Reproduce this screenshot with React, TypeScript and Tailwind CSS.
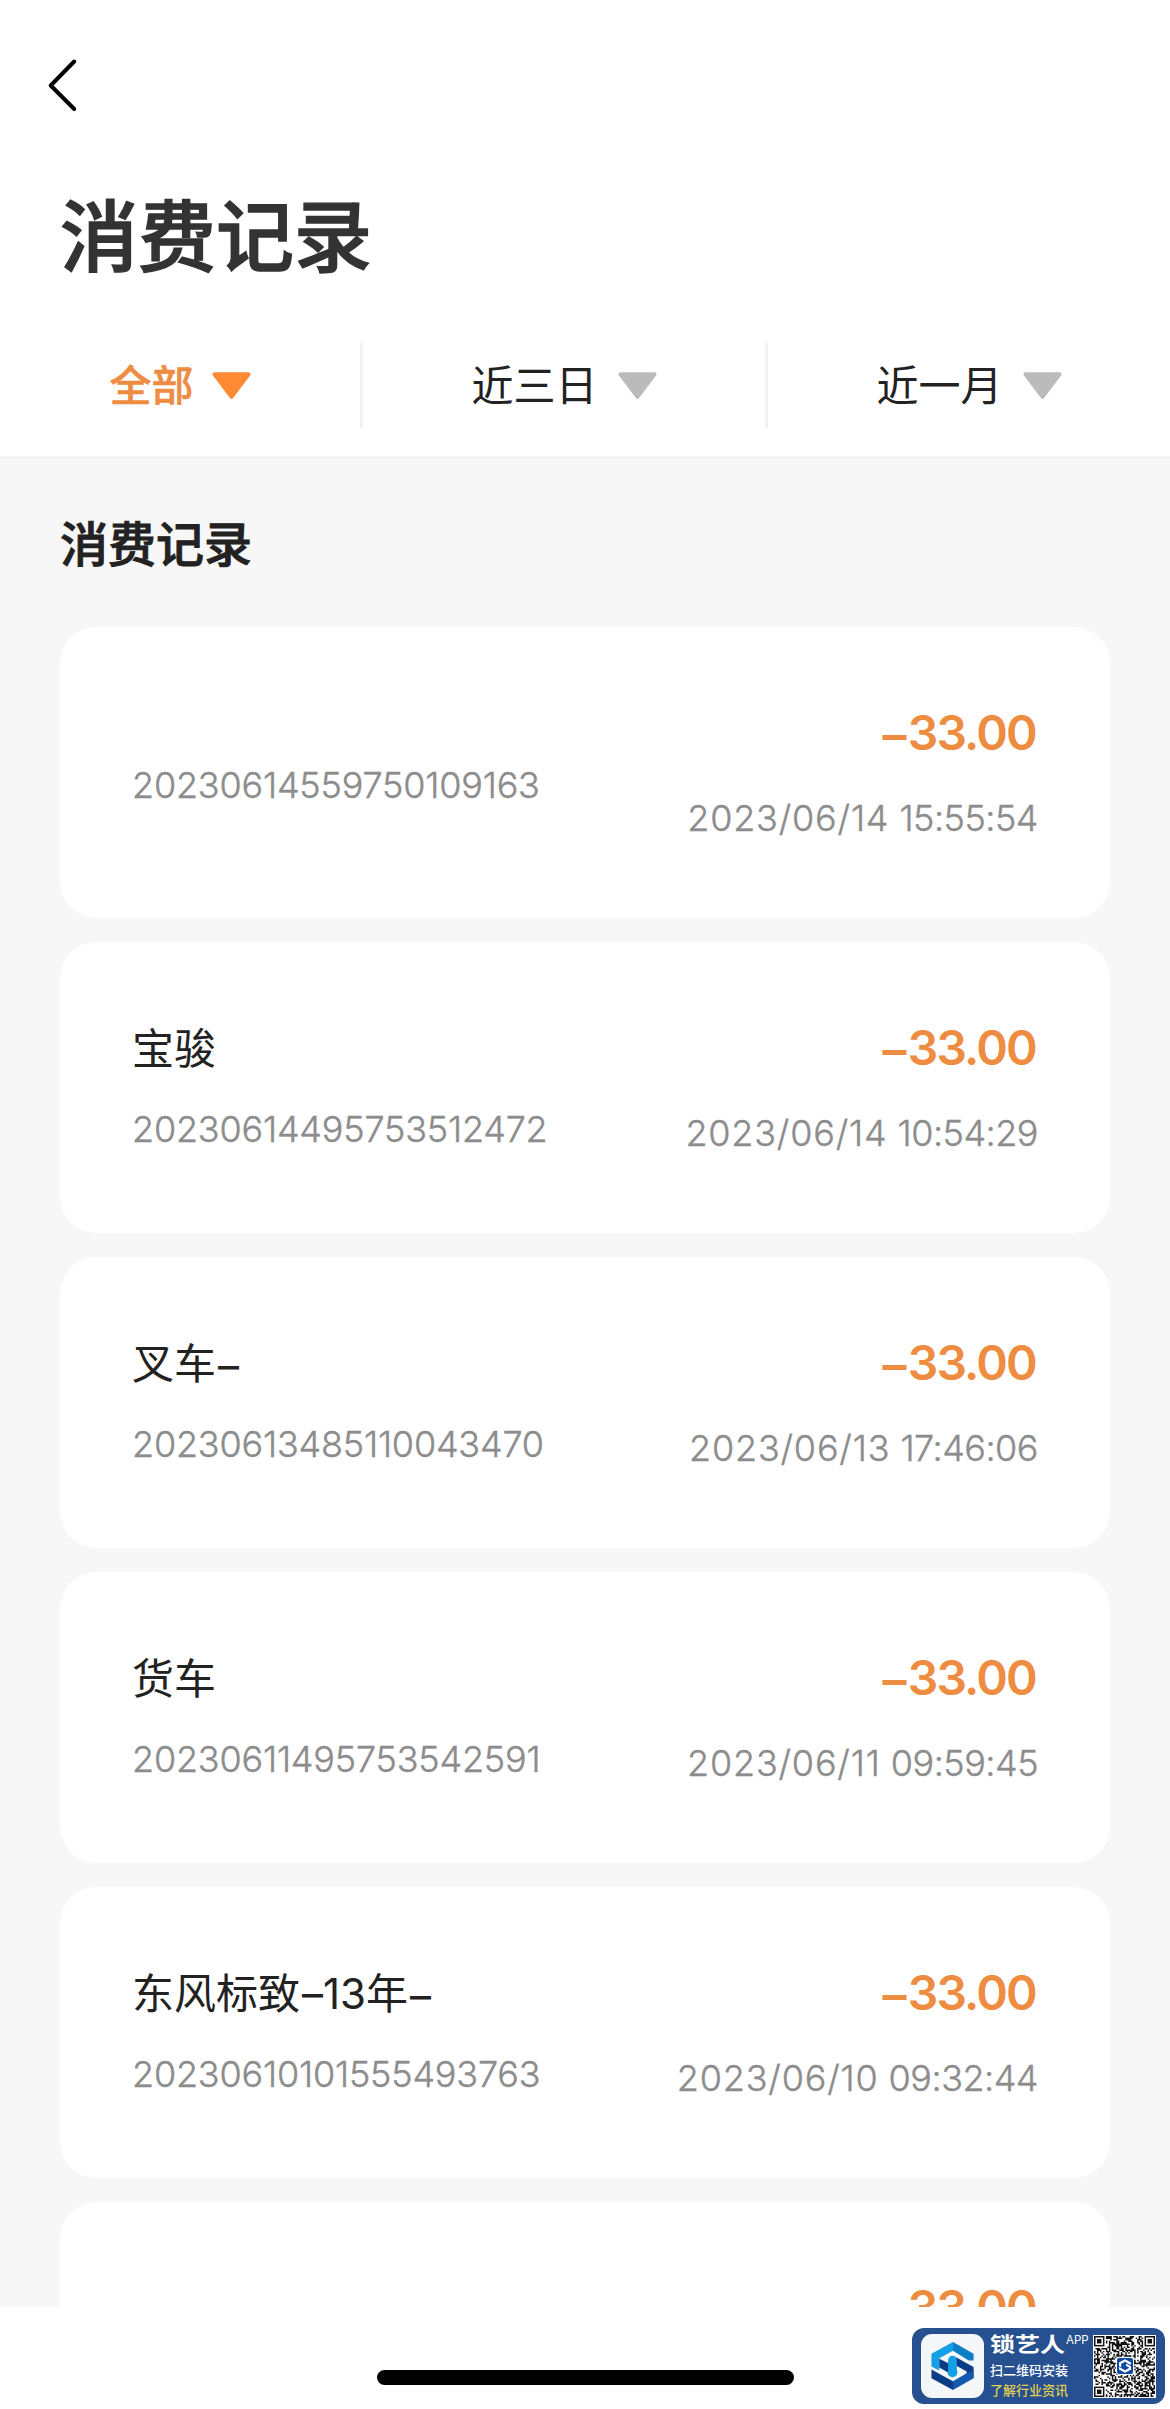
import clsx from "clsx";

type Expense = {
  title?: string;
  orderNo: string;
  amount: string;
  date: string;
  time: string;
};

const filters = [
  { label: "全部", active: true, className: "w-[363px] pr-[3px]" },
  { label: "近三日", active: false, className: "w-[405px] pr-[3px]" },
  { label: "近一月", active: false, className: "w-[402px]" },
];

const expenses: Expense[] = [
  { orderNo: "20230614559750109163", amount: "33.00", date: "2023/06/14", time: "15:55:54" },
  { title: "宝骏", orderNo: "20230614495753512472", amount: "33.00", date: "2023/06/14", time: "10:54:29" },
  { title: "叉车–", orderNo: "20230613485110043470", amount: "33.00", date: "2023/06/13", time: "17:46:06" },
  { title: "货车", orderNo: "20230611495753542591", amount: "33.00", date: "2023/06/11", time: "09:59:45" },
  { title: "东风标致–13年–", orderNo: "20230610101555493763", amount: "33.00", date: "2023/06/10", time: "09:32:44" },
  { orderNo: "", amount: "33.00", date: "", time: "" },
];

function BackIcon() {
  return (
    <svg className="h-[54px] w-[32px]" viewBox="0 0 32 54" fill="none" aria-hidden>
      <path d="M28.2 3.5 L4.7 27.5 L28.2 51" stroke="#000" strokeWidth="4" strokeLinecap="round" strokeLinejoin="round" />
    </svg>
  );
}

function CaretIcon({ active }: { active: boolean }) {
  return (
    <svg
      className={clsx("h-[27px] w-[39px]", active ? "text-[#ff8a34]" : "text-[#bbbbbb]")}
      viewBox="0 0 39 27"
      aria-hidden
    >
      <path
        d="M2.5 2.3 H36.5 L19.5 24.8 Z"
        fill="currentColor"
        stroke="currentColor"
        strokeWidth="4"
        strokeLinejoin="round"
      />
    </svg>
  );
}

function FilterBar() {
  return (
    <div className="flex h-[85px] items-center">
      {filters.map((filter, i) => (
        <div key={filter.label} className={clsx("relative flex h-full items-center justify-center", filter.className)}>
          <button
            className={clsx(
              "flex items-center text-[42px] leading-[60px]",
              filter.active
                ? "gap-[18px] font-medium text-[#ee8c42] [-webkit-text-stroke:0.5px_#ee8c42]"
                : "gap-5 text-[#222222]",
            )}
          >
            {filter.label}
            <CaretIcon active={filter.active} />
          </button>
          {i < filters.length - 1 && <span className="absolute right-0 top-0 h-full w-[3px] bg-[#f2f2f2]" />}
        </div>
      ))}
    </div>
  );
}

function CarTitle({ text }: { text: string }) {
  return (
    <p className="-mt-0.5 pb-0.5 text-[42px] leading-[59px] text-[#222222]">
      {text.split(/(–)/).map((part, i) =>
        part === "–" ? (
          <span key={i} className="relative top-[2px] ml-[2px]">
            –
          </span>
        ) : (
          part
        ),
      )}
    </p>
  );
}

function ExpenseCard({ item }: { item: Expense }) {
  return (
    <li className="flex h-[291px] shrink-0 items-center justify-between rounded-[36px] bg-white px-[72px]">
      <div>
        {item.title && <CarTitle text={item.title} />}
        <p className="mt-6 text-[36px] font-light leading-[50px] tracking-[-0.2px] text-[#8c8c8c] [-webkit-text-stroke:0.4px_#8c8c8c]">
          {item.orderNo}
        </p>
      </div>
      <div className="text-right">
        <p className="pr-[2px] text-[48px] font-semibold leading-[62px] tracking-[-1.8px] text-[#ee8c42]">
          <span className="relative top-[2px] mr-[3px]">–</span>
          {item.amount}
        </p>
        <p className="mt-[29px] h-[50px] text-[36px] font-light leading-[50px] text-[#8c8c8c] [-webkit-text-stroke:0.4px_#8c8c8c]">
          <span className="tracking-[0.8px]">{item.date}</span>{" "}
          <span className="tracking-[-0.5px]">{item.time}</span>
        </p>
      </div>
    </li>
  );
}

function BrandMark({ mono = false }: { mono?: boolean }) {
  return (
    <svg className="h-full w-full" viewBox="0 0 43 49" aria-hidden>
      <path d="M22 0 L0 12 V25 L8 29 V16.5 L22 9 Z" fill={mono ? "#fff" : "#13a0e6"} />
      <path d="M22 0 L43 12 V19 H38 L22 9 Z" fill={mono ? "#fff" : "#0c7fc6"} />
      {!mono && <path d="M8 17 L20 23 V33 L8 26 Z" fill="#0b3c86" />}
      <path d="M25 15.5 L43 25.5 V37 L36 33 V30 L25 24 Z" fill={mono ? "#fff" : "#0b3c86"} />
      <path d="M0 28 L22 40 V49 L0 37 Z" fill={mono ? "#fff" : "#0b3c86"} />
      <path d="M22 40 L36 32 L43 29 V37 L22 49 Z" fill={mono ? "#fff" : "#1559ae"} />
      {!mono && (
        <>
          <path d="M17 18.5 a4.5 4.5 0 0 1 9 0 V30 H17 Z" fill="#13a0e6" />
          <circle cx="21.5" cy="31" r="5" fill="#13a0e6" />
        </>
      )}
    </svg>
  );
}

const QR_SIZE = 41;

function inFinder(x: number, y: number) {
  const edge = QR_SIZE - 8;
  return (x < 8 && y < 8) || (x >= edge && y < 8) || (x < 8 && y >= edge);
}

function qrPath() {
  let seed = 20230614;
  let d = "";
  for (let y = 0; y < QR_SIZE; y++) {
    for (let x = 0; x < QR_SIZE; x++) {
      seed = (seed * 1103515245 + 12345) % 2147483648;
      if (!inFinder(x, y) && seed / 2147483648 > 0.5) d += `M${x} ${y}h1v1h-1z`;
    }
  }
  return d;
}

function QrCode() {
  const finders = [
    [0, 0],
    [QR_SIZE - 7, 0],
    [0, QR_SIZE - 7],
  ];
  return (
    <div className="relative flex h-[63px] w-[63px] items-center justify-center bg-white p-px">
      <svg className="h-full w-full" viewBox="0 0 41 41" aria-hidden>
        <path d={qrPath()} fill="#111" />
        {finders.map(([x, y]) => (
          <g key={`${x}-${y}`}>
            <rect x={x + 0.5} y={y + 0.5} width="6" height="6" fill="#fff" stroke="#111" />
            <rect x={x + 2} y={y + 2} width="3" height="3" fill="#111" />
          </g>
        ))}
      </svg>
      <span className="absolute h-[18px] w-[18px] rounded-[3px] border border-white bg-[#0d4aa0] px-[2px] py-px">
        <BrandMark mono />
      </span>
    </div>
  );
}

function AppBadge() {
  return (
    <div className="absolute bottom-[5px] right-[5px] flex h-[76px] w-[253px] items-center rounded-[12px] bg-[#26508f] pl-[9px]">
      <div className="h-16 w-[63px] rounded-[11px] bg-[#f4f6f7] px-[10px] py-2">
        <BrandMark />
      </div>
      <div className="ml-[6px] h-16 w-[103px] whitespace-nowrap text-white">
        <div className="flex h-[22px] items-start">
          <span className="inline-block scale-y-[0.82] text-[25px] font-bold leading-[22px]">锁艺人</span>
          <span className="ml-px text-[11.5px] leading-[13px]">APP</span>
        </div>
        <p className="mt-[5px] text-[13px] font-medium leading-[18px]">扫二维码安装</p>
        <p className="mt-[2px] text-[13px] font-medium leading-[18px] text-[#e2cf52]">了解行业资讯</p>
      </div>
      <QrCode />
    </div>
  );
}

export default function App() {
  return (
    <div className="relative flex h-[2409px] w-[1170px] flex-col overflow-hidden bg-white font-['Inter','Noto_Sans_CJK_SC',sans-serif]">
      <header className="h-[459px] shrink-0 border-b-[3px] border-[#f2f2f2]">
        <div className="pl-[46px] pt-[58px]">
          <BackIcon />
        </div>
        <h1 className="mt-[71px] pl-[60px] text-[78px] font-medium leading-[110px] text-[#333333] [-webkit-text-stroke:1.4px_#333333]">
          消费记录
        </h1>
        <div className="mt-[50px]">
          <FilterBar />
        </div>
      </header>

      <main className="h-[1848px] shrink-0 overflow-hidden bg-[#f7f7f7] px-[60px]">
        <h2 className="pt-[52px] text-[48px] font-medium leading-[67px] text-[#222222] [-webkit-text-stroke:0.9px_#222222]">
          消费记录
        </h2>
        <ul className="mt-[49px] flex flex-col gap-6">
          {expenses.map((item, i) => (
            <ExpenseCard key={i} item={item} />
          ))}
        </ul>
      </main>

      <footer className="flex grow items-end justify-center pb-6">
        <div className="h-[15px] w-[417px] rounded-full bg-black" />
      </footer>
      <AppBadge />
    </div>
  );
}
